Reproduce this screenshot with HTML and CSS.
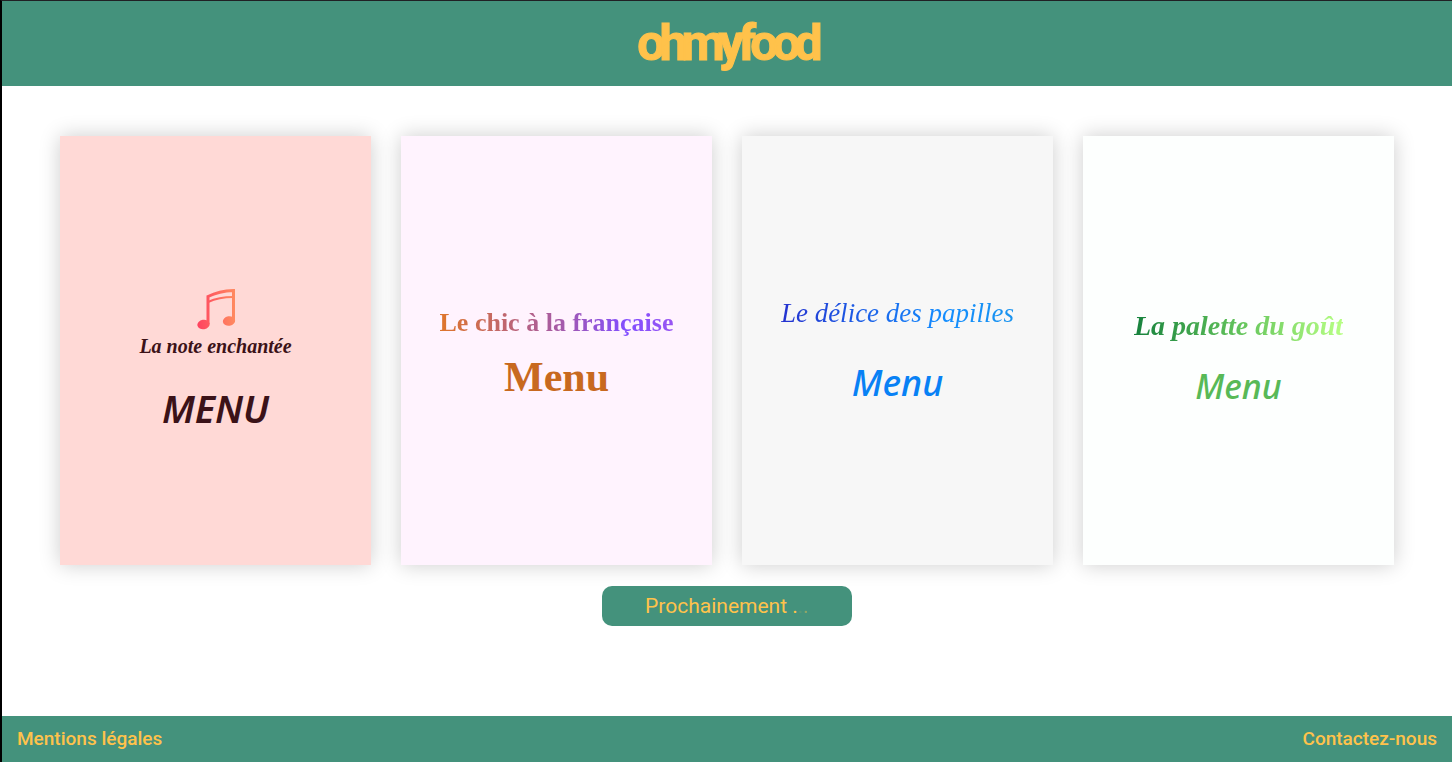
FILE: index.html
```html
<!DOCTYPE html>
<html lang="fr">
<head>
<meta charset="utf-8">
<meta name="viewport" content="width=device-width, initial-scale=1">
<title>ohmyfood</title>
<link rel="stylesheet" href="styles.css">
</head>
<body>
<header class="header"><h1 class="logo">ohmyfood</h1></header>
<main class="main">
  <div class="menus">
    <a class="card card--note" href="#note">
      <svg class="card__icon" viewBox="0 0 40 42" aria-hidden="true">
        <defs><linearGradient id="note" x1="0" x2="40" y1="20" y2="20" gradientUnits="userSpaceOnUse"><stop offset="0" stop-color="#ff4060"/><stop offset="1" stop-color="#ff8c60"/></linearGradient></defs>
        <g fill="none" stroke="url(#note)" stroke-width="3">
          <path d="M12 36V8.500Q23 3 37.500 2.500V33"/>
          <path stroke-width="2" d="M12 14Q23 9 37 9"/>
        </g>
        <g fill="url(#note)"><ellipse cx="7.500" cy="36.500" rx="6.200" ry="4.800" transform="rotate(-10 7.500 36.500)"/><ellipse cx="33" cy="33" rx="6.200" ry="4.800" transform="rotate(-10 33 33)"/></g>
      </svg>
      <span class="card__name">La note enchantée</span>
      <span class="card__menu">MENU</span>
    </a>
    <a class="card card--chic" href="#chic">
      <span class="card__name">Le chic à la française</span>
      <span class="card__menu">Menu</span>
    </a>
    <a class="card card--delice" href="#delice">
      <span class="card__name">Le délice des papilles</span>
      <span class="card__menu">Menu</span>
    </a>
    <a class="card card--palette" href="#palette">
      <span class="card__name">La palette du goût</span>
      <span class="card__menu">Menu</span>
    </a>
  </div>
  <p class="soon">Prochainement .<span class="dot dot--out">.</span><span class="dot">.</span></p>
</main>
<footer class="footer">
  <a class="footer__link" href="#mentions">Mentions légales</a>
  <a class="footer__link" href="#contact">Contactez-nous</a>
</footer>
</body>
</html>
```
FILE: styles.css
```css
* { box-sizing: border-box; }

body {
  display: flex;
  flex-direction: column;
  min-height: 100vh;
  margin: 0;
  border-top: 1px solid #202024;
  border-left: 2px solid #000;
  background: #fff;
  font-family: Roboto, sans-serif;
}

a { text-decoration: none; }

.header {
  display: flex;
  justify-content: center;
  padding: 12px;
  background: #44927c;
}

.logo {
  margin: 0;
  color: #ffc24b;
  font-size: 50px;
  line-height: 61px;
  font-weight: 700;
  letter-spacing: -6px;
  -webkit-text-stroke: 1px #ffc24b;
}

.main {
  display: flex;
  flex: 1;
  flex-direction: column;
  align-items: center;
  gap: 21px;
  padding: 50px 58px;
}

.menus {
  display: grid;
  grid-template-columns: repeat(4, 1fr);
  gap: 30px;
  width: 100%;
}

.card {
  display: flex;
  flex-direction: column;
  align-items: center;
  justify-content: center;
  aspect-ratio: 311 / 429;
  box-shadow: 0 0 20px rgba(0, 0, 0, 0.2);
  white-space: nowrap;
}

.card__icon { width: 40px; height: 42px; }

.card__name {
  color: transparent;
  background-clip: text;
  -webkit-background-clip: text;
}

.card__menu {
  font: italic 500 36px/48px "Noto Sans", sans-serif;
}

.card--note { gap: 20px; padding-top: 18px; background: #ffd9d6; }
.card--note .card__icon { margin-bottom: -22px; }
.card--note .card__name { color: #3b1218; font: italic bold 20px/36px "Liberation Serif", serif; }
.card--note .card__menu { color: #3b1218; font-size: 38px; font-weight: 600; }

.card--chic { gap: 12px; padding-top: 4px; background: #fff3fe; }
.card--chic .card__name { font: bold 26px/36px "Liberation Serif", serif; background-image: linear-gradient(90deg, #df752b, #a75ba4 50%, #824dff 80%, #9855f2); }
.card--chic .card__menu { color: #c8691f; font: bold 42px/48px "Liberation Serif", serif; }

.card--delice { gap: 28px; background: #f7f7f7; }
.card--delice .card__name { font: italic 27px/36px "Liberation Serif", serif; background-image: linear-gradient(90deg, #2431cf, #138dff 70%, #1993ee); }
.card--delice .card__menu { color: #0881f5; }

.card--palette { gap: 18px; padding-top: 16px; background: #fdfffe; }
.card--palette .card__name { font: italic bold 28px/36px "Liberation Serif", serif; background-image: linear-gradient(90deg, #16813d, #62c35b 50%, #b7ff84); }
.card--palette .card__menu { color: #58b957; font-size: 34px; }

.soon {
  margin: 0;
  width: 250px;
  border-radius: 10px;
  background: #44927c;
  color: #ffc24b;
  font-size: 21px;
  line-height: 40px;
  text-align: center;
}

.dot { opacity: 0.4; }
.dot--out { opacity: 0.1; }

.footer {
  display: flex;
  justify-content: space-between;
  padding: 8px 15px;
  background: #44927c;
}

.footer__link {
  color: #ffc24b;
  font-size: 19px;
  line-height: 30px;
  font-weight: 500;
}
```
